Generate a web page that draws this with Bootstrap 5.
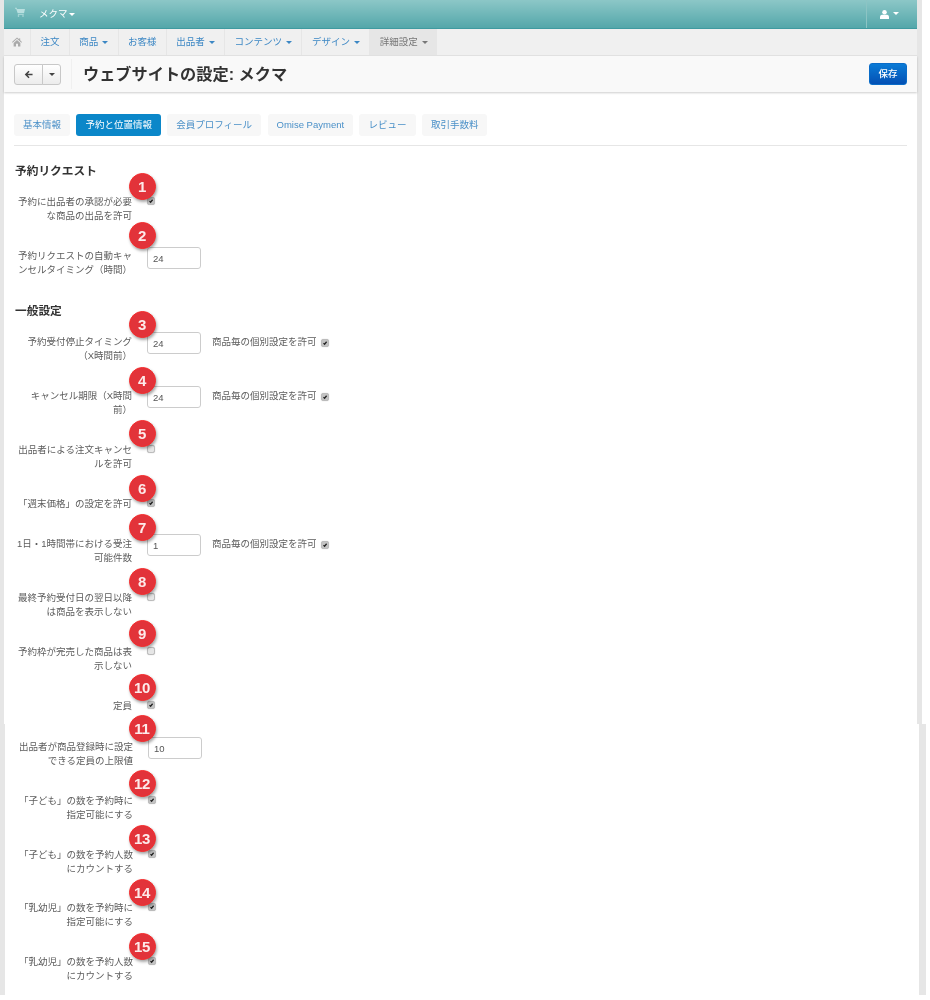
<!DOCTYPE html>
<html lang="ja">
<head>
<meta charset="utf-8">
<title>ウェブサイトの設定</title>
<link href="https://cdn.jsdelivr.net/npm/bootstrap@5.3.0/dist/css/bootstrap.min.css" rel="stylesheet">
<style>
html,body{height:1000px;overflow:hidden}
body{font-family:"Liberation Sans","Noto Sans CJK JP",sans-serif;font-size:9.5px;line-height:14.3px;color:#5c5c5c;text-spacing-trim:space-all;
 background-color:#fff;background-repeat:no-repeat;
 background-image:linear-gradient(#e6e6e6,#e6e6e6),linear-gradient(#e6e6e6,#e6e6e6),linear-gradient(#e6e6e6,#e6e6e6),linear-gradient(#e6e6e6,#e6e6e6);
 background-size:4px 724px,5px 724px,5px 271px,7px 271px;
 background-position:0 0,917px 0,0 724px,919px 724px}
.shell{margin-left:4px;width:913px;filter:blur(.3px)}
.topbar{height:29px;background:linear-gradient(#8cc7c7,#54a7aa);border-bottom:1px solid #3f9aa0;box-shadow:0 1px 0 #a8d0e0;color:#fff;padding-left:11px}
.cart-ic{width:10px;height:10px;margin-top:-4px}
.shop-name{margin-left:14px;font-size:9.5px}
.shop-name::after,.drop-mark::after{content:"";display:inline-block;border:3px solid transparent;border-top-color:currentColor;border-bottom:0;margin-left:4px;vertical-align:2px}
.shop-name::after{margin-left:1px;vertical-align:1px}
.user-slot{width:51px;height:28px;border-left:1px solid #8cc4c4;padding-right:6px}
.mainnav{height:27px;background:#f0f0f0;border-bottom:1px solid #e4e4e4}
.mainnav a{display:flex;align-items:center;height:100%;padding:0 9.4px;color:#3c87c4;text-decoration:none;border-right:1px solid #e6e6e6;white-space:nowrap}
.mainnav a.home-link{padding:0 8px;width:27px;color:#aaa}
.mainnav a.now{background:#e6e6e6;color:#777;border-right:0}
.toolbar{height:36px;background:#f9f9f9;box-shadow:0 1px 2px rgba(0,0,0,.2);padding:0 10px;position:relative}
.back-group .btn{height:21px;font-size:9px;line-height:1;padding:0;background:linear-gradient(#fff,#ececec);border:1px solid #c8c8c8;border-radius:3px;color:#444;display:flex;align-items:center;justify-content:center}
.back-group .btn:first-child{width:29px}
.back-group .btn:last-child{width:19px}
.back-group .btn:last-child::after{margin-left:0}
.page-ttl{margin:0 0 0 10px;padding-left:11px;border-left:1px solid #f0f0f0;height:30px;font-size:16.2px;line-height:30px;font-weight:700;color:#333}
.save-btn{width:38px;height:22px;padding:0;font-size:9.5px;font-weight:500;color:#fff;background:linear-gradient(#0a7bd6,#0450b4);border:1px solid #0a6cc8;border-radius:3px}
.tabs-row{padding:22px 10px 0;gap:6.4px;flex-wrap:nowrap}
.tabs-row .nav-link{height:22px;line-height:22px;padding:0 9px;border-radius:3px;background:#f7f7f7;color:#4a90c8;white-space:nowrap;font-size:9.5px}
.tabs-row .nav-link.active{background:#0b87c9;color:#fff}
.rule{margin:9px 10px 0;border:0;border-top:1px solid #e6e6e6;opacity:1}
.frm{position:relative;padding-left:10px}
.sect-ttl{margin:18px 0 14px 1px;font-size:11.7px;line-height:14px;font-weight:700;color:#333}
.sect-ttl.nxt{margin-top:4px}
.frm-row{display:flex;position:relative;height:54px}
.frm-row.one{height:40px}
.frm-row.tight{height:53px}
.lbl{width:118px;text-align:right;flex:none;margin:0;padding-top:3px}
.ctl{margin-left:15px;display:flex;align-items:flex-start}
.numb{width:54px;height:22px;padding:0 5px;font-size:9.5px;color:#555;border:1px solid #ccc;border-radius:3px;box-shadow:none}
.numb.dn{margin-top:1px}
.cb{width:8px;height:8px;margin:5px 0 0;border:1px solid #bbb;border-radius:2px;background-color:#e6e6e6;box-shadow:0 0 1px rgba(0,0,0,.3);flex:none}
.cb:checked{background-color:#c4c4c4;border-color:#bbb;background-size:100%;background-image:url("data:image/svg+xml,%3csvg xmlns='http://www.w3.org/2000/svg' viewBox='0 0 10 10'%3e%3cpath fill='none' stroke='%23222' stroke-width='2.2' d='M2.5 5.2l1.8 1.8 3.4-4'/%3e%3c/svg%3e")}
.each-lbl{margin-left:11px;white-space:nowrap;padding-top:3px}
.each-lbl+.cb{margin:7px 0 0 4px}
.pin{position:absolute;left:114.5px;width:27px;height:27px;border-radius:50%;background:#e2333a;border:1px solid #f52a2a;box-shadow:1px 2px 3px rgba(0,0,0,.35);color:#fdeaea;font:700 15px/25px "Liberation Sans",sans-serif;text-align:center;letter-spacing:-.3px;z-index:2}
.up6{top:-19.5px}.up7{top:-20.5px}.up8{top:-21.5px}.up9{top:-22.5px}.up11{top:-24.5px}
.lowr{margin:1px 0 0 1px}
.lowr .pin{left:113.5px}
</style>
</head>
<body>
<div class="shell">
  <div class="topbar d-flex align-items-center justify-content-between">
    <div class="d-flex align-items-center">
      <svg class="cart-ic" viewBox="0 0 12 12"><path fill="#b9dfdf" d="M0 1h2l.5 1.5H12l-1.2 5H3.2L1.4 2H0zM3.5 8.3h7v1h-7z"/><circle cx="4.2" cy="10.8" r="1" fill="#b9dfdf"/><circle cx="9.6" cy="10.8" r="1" fill="#b9dfdf"/></svg>
      <span class="shop-name">メクマ</span>
    </div>
    <div class="user-slot d-flex align-items-center justify-content-center">
      <svg width="9" height="9" viewBox="0 0 10 10"><circle cx="5" cy="2.6" r="2.5" fill="#fff"/><path fill="#fff" d="M0 10V7.5Q0 5.8 2 5.3h6q2 .5 2 2.2V10z"/></svg>
      <span class="drop-mark"></span>
    </div>
  </div>
  <nav class="mainnav d-flex">
    <a class="home-link" href="#"><svg width="11" height="10" viewBox="0 0 11 10"><path fill="#aaa" d="M5.5 0L0 5l.7.7L5.5 1.5l4.8 4.2.7-.7-2-1.8V.8H8v1.2zM1.8 6v4h2.6V7h2.2v3h2.6V6L5.5 2.7z"/></svg></a>
    <a href="#">注文</a>
    <a href="#" class="drop-mark">商品</a>
    <a href="#">お客様</a>
    <a href="#" class="drop-mark">出品者</a>
    <a href="#" class="drop-mark">コンテンツ</a>
    <a href="#" class="drop-mark">デザイン</a>
    <a href="#" class="drop-mark now">詳細設定</a>
  </nav>
  <div class="toolbar d-flex align-items-center justify-content-between">
    <div class="d-flex align-items-center">
      <div class="btn-group back-group">
        <button class="btn" type="button"><svg width="9" height="9" viewBox="0 0 10 10"><path fill="#444" d="M5 .8L.8 5 5 9.2l1.2-1.2L4 5.9h5.5V4.1H4l2.2-2.1z"/></svg></button>
        <button class="btn drop-mark" type="button" aria-label="menu"></button>
      </div>
      <h1 class="page-ttl">ウェブサイトの設定: メクマ</h1>
    </div>
    <button class="btn save-btn" type="button">保存</button>
  </div>
  <div class="nav nav-pills tabs-row">
    <a class="nav-link" href="#">基本情報</a>
    <a class="nav-link active" href="#">予約と位置情報</a>
    <a class="nav-link" href="#">会員プロフィール</a>
    <a class="nav-link" href="#">Omise Payment</a>
    <a class="nav-link" href="#">レビュー</a>
    <a class="nav-link" href="#">取引手数料</a>
  </div>
  <hr class="rule">
  <div class="frm">
    <h2 class="sect-ttl">予約リクエスト</h2>
    <div class="frm-row"><span class="pin up6">1</span><label class="lbl">予約に出品者の承認が必要な商品の出品を許可</label><div class="ctl"><input class="form-check-input cb" type="checkbox" checked></div></div>
    <div class="frm-row"><span class="pin up11">2</span><label class="lbl">予約リクエストの自動キャンセルタイミング（時間）</label><div class="ctl"><input class="form-control numb dn" value="24"></div></div>
    <h2 class="sect-ttl nxt">一般設定</h2>
    <div class="frm-row"><span class="pin up8">3</span><label class="lbl">予約受付停止タイミング（X時間前）</label><div class="ctl"><input class="form-control numb" value="24"><span class="each-lbl">商品毎の個別設定を許可</span><input class="form-check-input cb" type="checkbox" checked></div></div>
    <div class="frm-row"><span class="pin up6">4</span><label class="lbl">キャンセル期限（X時間前）</label><div class="ctl"><input class="form-control numb" value="24"><span class="each-lbl">商品毎の個別設定を許可</span><input class="form-check-input cb" type="checkbox" checked></div></div>
    <div class="frm-row"><span class="pin up7">5</span><label class="lbl">出品者による注文キャンセルを許可</label><div class="ctl"><input class="form-check-input cb" type="checkbox"></div></div>
    <div class="frm-row one"><span class="pin up6">6</span><label class="lbl">「週末価格」の設定を許可</label><div class="ctl"><input class="form-check-input cb" type="checkbox" checked></div></div>
    <div class="frm-row"><span class="pin up7">7</span><label class="lbl">1日・1時間帯における受注可能件数</label><div class="ctl"><input class="form-control numb" value="1"><span class="each-lbl">商品毎の個別設定を許可</span><input class="form-check-input cb" type="checkbox" checked></div></div>
    <div class="frm-row"><span class="pin up7">8</span><label class="lbl">最終予約受付日の翌日以降は商品を表示しない</label><div class="ctl"><input class="form-check-input cb" type="checkbox"></div></div>
    <div class="frm-row"><span class="pin up9">9</span><label class="lbl">予約枠が完売した商品は表示しない</label><div class="ctl"><input class="form-check-input cb" type="checkbox"></div></div>
    <div class="frm-row one"><span class="pin up9">10</span><label class="lbl">定員</label><div class="ctl"><input class="form-check-input cb" type="checkbox" checked></div></div>
    <div class="lowr">
    <div class="frm-row"><span class="pin up9">11</span><label class="lbl">出品者が商品登録時に設定できる定員の上限値</label><div class="ctl"><input class="form-control numb" value="10"></div></div>
    <div class="frm-row"><span class="pin up8">12</span><label class="lbl">「子ども」の数を予約時に指定可能にする</label><div class="ctl"><input class="form-check-input cb" type="checkbox" checked></div></div>
    <div class="frm-row tight"><span class="pin up7">13</span><label class="lbl">「子ども」の数を予約人数にカウントする</label><div class="ctl"><input class="form-check-input cb" type="checkbox" checked></div></div>
    <div class="frm-row"><span class="pin up6">14</span><label class="lbl">「乳幼児」の数を予約時に指定可能にする</label><div class="ctl"><input class="form-check-input cb" type="checkbox" checked></div></div>
    <div class="frm-row"><span class="pin up6">15</span><label class="lbl">「乳幼児」の数を予約人数にカウントする</label><div class="ctl"><input class="form-check-input cb" type="checkbox" checked></div></div>
    </div>
  </div>
</div>
<script src="https://cdn.jsdelivr.net/npm/bootstrap@5.3.0/dist/js/bootstrap.bundle.min.js"></script>
</body>
</html>
